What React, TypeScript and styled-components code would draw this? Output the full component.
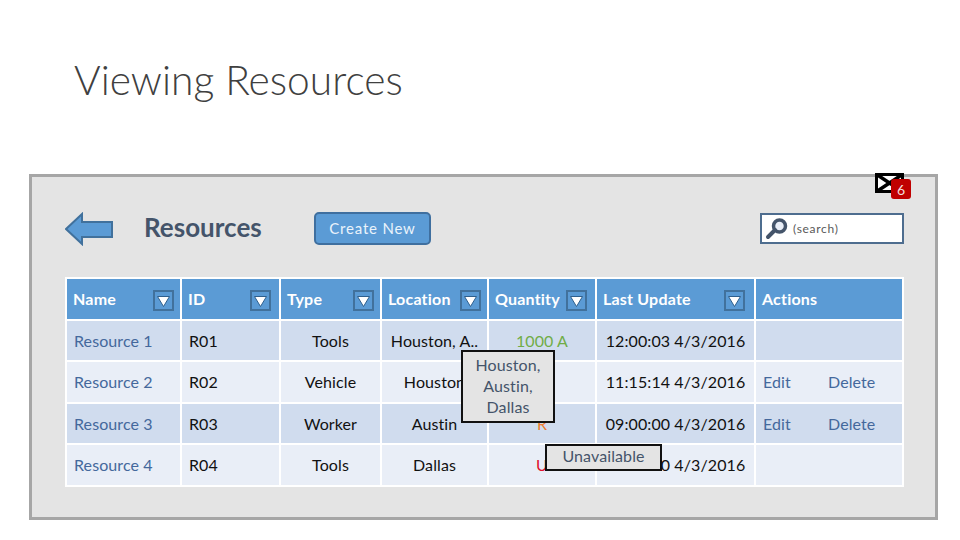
import React from "react";
import styled, { createGlobalStyle } from "styled-components";

const Global = createGlobalStyle`
  html, body { margin: 0; padding: 0; background: #fff; }
  body { font-family: Lato, "Open Sans", sans-serif; }
`;

const Page = styled.div`
  width: 960px;
  height: 540px;
  overflow: hidden;
  display: flex;
  flex-direction: column;
`;

const Title = styled.h1`
  margin: 0;
  padding: 56px 0 0 74px;
  height: 174px;
  box-sizing: border-box;
  font-size: 40.7px;
  line-height: 47px;
  font-weight: 300;
  color: #404040;
`;

const Panel = styled.section`
  position: relative;
  margin-left: 29px;
  width: 909px;
  height: 346px;
  box-sizing: border-box;
  border: 3px solid #a6a6a6;
  background: #e4e4e4;
  padding: 34px 31px 0 33px;
`;

const Toolbar = styled.div`
  display: flex;
  align-items: center;
  height: 35px;
  margin-bottom: 31px;
`;

const BackArrow = styled.svg`
  width: 49px;
  height: 34px;
  flex: none;
`;

const Heading = styled.h2`
  margin: 0 0 3px 30px;
  width: 170px;
  font-size: 26px;
  font-weight: 700;
  color: #44546a;
`;

const CreateButton = styled.button`
  width: 117px;
  height: 33px;
  box-sizing: border-box;
  border: 2px solid #3f6f9f;
  border-radius: 5px;
  background: #5b9bd5;
  color: #eaf3fb;
  font: 400 15px/26px Lato, sans-serif;
  letter-spacing: 0.8px;
  padding: 0 0 2px;
`;

const Search = styled.div`
  margin-left: auto;
  width: 144px;
  height: 31px;
  box-sizing: border-box;
  border: 2px solid #4e6d8f;
  background: #fff;
  display: flex;
  align-items: center;
  padding-left: 3px;
  gap: 4px;
  font-size: 12px;
  color: #595959;
  letter-spacing: 0.7px;
`;

const Table = styled.div`
  width: 839px;
  box-sizing: border-box;
  background: #fff;
  padding: 2px;
  display: grid;
  grid-template-columns: 113px 97px 99px 105px 106px 157px 146px;
  grid-template-rows: 40px 39px 40px 39px 40px;
  gap: 2px;
  position: relative;
`;

const HeadCell = styled.div<{ $inset: number }>`
  background: #5b9bd5;
  color: #fff;
  font-size: 16px;
  font-weight: 700;
  display: flex;
  align-items: center;
  justify-content: space-between;
  padding: 0 ${(p) => p.$inset}px 2px 6px;
  letter-spacing: 0.2px;
  white-space: nowrap;
`;

const Cell = styled.div<{ $odd: boolean; $center?: boolean; $color?: string }>`
  background: ${(p) => (p.$odd ? "#d0dcee" : "#e9eef7")};
  color: ${(p) => p.$color ?? "#111"};
  font-size: 16px;
  display: flex;
  align-items: center;
  justify-content: ${(p) => (p.$center ? "center" : "flex-start")};
  padding: 0 7px 1px;
  letter-spacing: 0.1px;
  white-space: nowrap;
`;

const ActionLink = styled.span`
  color: #44689c;
  width: 65px;
`;

const FilterBox = styled.svg`
  width: 21px;
  height: 21px;
  flex: none;
  margin-top: 5px;
`;

const Tip = styled.div<{ $left: number; $top: number; $width: number; $height: number; $padTop: number; $leading: number }>`
  position: absolute;
  left: ${(p) => p.$left}px;
  top: ${(p) => p.$top}px;
  width: ${(p) => p.$width}px;
  height: ${(p) => p.$height}px;
  padding-top: ${(p) => p.$padTop}px;
  box-sizing: border-box;
  border: 2px solid #111;
  background: #e4e4e4;
  color: #44546a;
  font-size: 16px;
  line-height: ${(p) => p.$leading}px;
  text-align: center;
  letter-spacing: 0.1px;
`;

const Mail = styled.svg`
  position: absolute;
  left: 843px;
  top: -4px;
  width: 29px;
  height: 20px;
`;

const Badge = styled.div`
  position: absolute;
  left: 859px;
  top: 2px;
  width: 20px;
  height: 20px;
  border-radius: 3px;
  background: #c00000;
  color: #f3dcdc;
  font-size: 14px;
  display: flex;
  align-items: center;
  justify-content: center;
`;

const Filter = () => (
  <FilterBox viewBox="0 0 21 21">
    <rect x="1" y="1" width="19" height="19" fill="#5b9bd5" stroke="#41719c" strokeWidth="2" />
    <path d="M4.5 6.5 H16.5 L10.5 16.5 Z" fill="#fff" stroke="#2f5f8c" strokeWidth="1" />
  </FilterBox>
);

const heads = [
  { label: "Name", inset: 6 },
  { label: "ID", inset: 8 },
  { label: "Type", inset: 6 },
  { label: "Location", inset: 6 },
  { label: "Quantity", inset: 8 },
  { label: "Last Update", inset: 9 },
  { label: "Actions", inset: 6 },
];

const rows = [
  { name: "Resource 1", id: "R01", type: "Tools", loc: "Houston, A..", qty: "1000 A", qtyColor: "#70ad47", time: "12:00:03 4/3/2016", actions: false },
  { name: "Resource 2", id: "R02", type: "Vehicle", loc: "Houston", qty: "A", qtyColor: "#70ad47", time: "11:15:14 4/3/2016", actions: true },
  { name: "Resource 3", id: "R03", type: "Worker", loc: "Austin", qty: "R", qtyColor: "#ed7d31", time: "09:00:00 4/3/2016", actions: true },
  { name: "Resource 4", id: "R04", type: "Tools", loc: "Dallas", qty: "U", qtyColor: "#e0102a", time: "10:00:00 4/3/2016", actions: false },
];

export default function App() {
  return (
    <Page>
      <Global />
      <Title>Viewing Resources</Title>
      <Panel>
        <Mail viewBox="0 0 29 20">
          <rect x="1.5" y="1.5" width="26" height="17" fill="#fff" stroke="#000" strokeWidth="3" />
          <path d="M1 1 L28 19 M28 1 L1 19" stroke="#000" strokeWidth="3.5" />
        </Mail>
        <Badge>6</Badge>
        <Toolbar>
          <BackArrow viewBox="0 0 49 34">
            <path d="M1 17 L17 2 V10 H47 V25 H17 V32 Z" fill="#5b9bd5" stroke="#41719c" strokeWidth="2" />
          </BackArrow>
          <Heading>Resources</Heading>
          <CreateButton>Create New</CreateButton>
          <Search>
            <svg width="24" height="22" viewBox="0 0 24 22">
              <circle cx="14.5" cy="8" r="6" fill="#e9eef7" stroke="#44546a" strokeWidth="3.5" />
              <path d="M10 12 L3 19" stroke="#44546a" strokeWidth="4" strokeLinecap="round" />
            </svg>
            (search)
          </Search>
        </Toolbar>
        <Table>
          {heads.map((h, i) => (
            <HeadCell key={h.label} $inset={h.inset}>
              {h.label}
              {i < 6 && <Filter />}
            </HeadCell>
          ))}
          {rows.map((r, i) => (
            <React.Fragment key={r.id}>
              <Cell $odd={i % 2 === 0} $color="#44689c">{r.name}</Cell>
              <Cell $odd={i % 2 === 0}>{r.id}</Cell>
              <Cell $odd={i % 2 === 0} $center>{r.type}</Cell>
              <Cell $odd={i % 2 === 0} $center>{r.loc}</Cell>
              <Cell $odd={i % 2 === 0} $center $color={r.qtyColor}>{r.qty}</Cell>
              <Cell $odd={i % 2 === 0} $center>{r.time}</Cell>
              <Cell $odd={i % 2 === 0}>
                {r.actions && (
                  <>
                    <ActionLink>Edit</ActionLink>
                    <ActionLink>Delete</ActionLink>
                  </>
                )}
              </Cell>
            </React.Fragment>
          ))}
          <Tip $left={396} $top={73} $width={94} $height={73} $padTop={2} $leading={21}>
            Houston,
            <br />
            Austin,
            <br />
            Dallas
          </Tip>
          <Tip $left={480} $top={167} $width={117} $height={27} $padTop={0} $leading={19}>
            Unavailable
          </Tip>
        </Table>
      </Panel>
    </Page>
  );
}
